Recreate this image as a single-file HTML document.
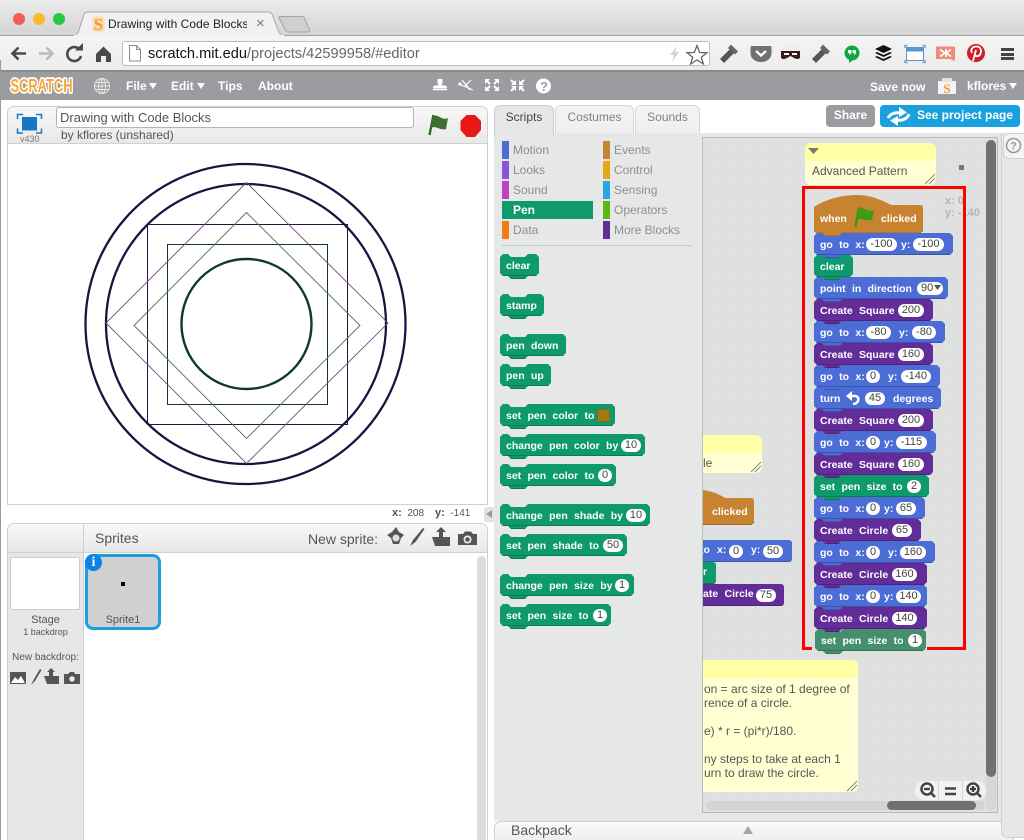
<!DOCTYPE html>
<html><head><meta charset="utf-8"><title>Drawing with Code Blocks</title>
<style>
html,body{margin:0;padding:0;background:#fff}
#r{position:relative;width:1024px;height:840px;overflow:hidden;background:#fff;font-family:"Liberation Sans",sans-serif}
#r div,#r span,#r svg{position:absolute}
.t{white-space:nowrap}
.b{height:25px;color:#fff;font:bold 10.5px/22px "Liberation Sans",sans-serif;white-space:nowrap;word-spacing:3.4px;
clip-path:polygon(0 3px,3px 0,8px 0,11px 3px,25px 3px,28px 0,calc(100% - 3px) 0,100% 3px,100% 19px,calc(100% - 3px) 22px,28px 22px,25px 25px,11px 25px,8px 22px,3px 22px,0 19px)}
.b b{position:absolute;top:1px;font-weight:bold}
.b i,.pi{position:absolute;top:5px;height:13px;border-radius:7px;background:#fff;color:#444;font:normal 11px/13px "Liberation Sans",sans-serif;text-align:center;word-spacing:0}
.m{background:linear-gradient(#4c6cd6 0 21px,#3a52a8 21px 22px,#4c6cd6 22px 24px,#3a52a8 24px)}
.p{background:linear-gradient(#0e9a6c 0 21px,#0a7a55 21px 22px,#0e9a6c 22px 24px,#0a7a55 24px)}
.v{background:linear-gradient(#632d99 0 21px,#4e2279 21px 22px,#632d99 22px 24px,#4e2279 24px)}
.g{background:linear-gradient(#458f70 0 21px,#367259 21px 22px,#458f70 22px 24px,#367259 24px)}
.c{font-size:12px;color:#8d8f92;line-height:18px;white-space:nowrap}
.s{width:7px;height:18px}
.nh{background:#ffffa5}
.nb{background:#ffffd2}
.nt{color:#555;font-size:12px;line-height:14px;white-space:nowrap}
.w{font:bold 12px/17px "Liberation Sans",sans-serif;color:#fff;white-space:nowrap}
</style></head><body><div id="r">

<!-- browser chrome -->
<div style="left:0;top:0;width:1024px;height:36px;background:linear-gradient(#ececec,#d4d4d4);border-bottom:1px solid #a3a3a3;box-sizing:border-box"></div>
<div style="left:0;top:36px;width:1024px;height:36px;background:linear-gradient(#f4f4f4,#ececec);border-bottom:2px solid #8b8b8b;box-sizing:border-box"></div>
<div style="left:13px;top:13px;width:12px;height:12px;border-radius:50%;background:#f45c57"></div>
<div style="left:33px;top:13px;width:12px;height:12px;border-radius:50%;background:#fcb82e"></div>
<div style="left:53px;top:13px;width:12px;height:12px;border-radius:50%;background:#27c93f"></div>
<svg style="left:0;top:0" width="330" height="37"><path d="M74 35.500C77 35.500 78 33 79 30L84 14C85 12.500 86 12 88 12H268C270 12 271 12.500 272 14L278 30C279 33 281 35.500 284 35.500Z" fill="#f1f1f1" stroke="#a8a8a8"/><path d="M74 35.500H284" stroke="#f1f1f1" stroke-width="1.500"/><path d="M280 16.500H302C303 16.500 304 17 304.500 18L309.500 29.500C310 31 309 32 307.500 32H288C286.500 32 285.500 31 285 29.500L279 18C278.500 17 279 16.500 280 16.500Z" fill="#cfcfcf" stroke="#a5a5a5"/></svg>
<svg style="left:92px;top:16px" width="13" height="17"><rect x=".5" y=".5" width="12" height="15.500" rx="3" fill="#fbdcb2"/><text x="6.500" y="14" text-anchor="middle" font-family="Liberation Serif" font-weight="bold" font-size="17" fill="#f39a2a">S</text></svg>
<div class="t" style="left:108px;top:16px;width:139px;overflow:hidden;font-size:12px;line-height:17px;color:#222;letter-spacing:.05px">Drawing with Code Blocks</div>
<div class="t" style="left:256px;top:15px;font-size:15px;line-height:18px;color:#777">×</div>
<!-- nav -->
<svg style="left:9px;top:42px" width="110" height="24" fill="none"><path d="M17 11.500H4M9.500 5.500L3.500 11.500L9.500 17.500" stroke="#4a4a4a" stroke-width="2.600"/><path d="M30 11.500H43M37.500 5.500L43.500 11.500L37.500 17.500" stroke="#b9b9b9" stroke-width="2.600"/><path d="M71 8A7 7 0 1 0 72 14" stroke="#4a4a4a" stroke-width="2.600"/><path d="M66 8.500H74V1Z" fill="#4a4a4a"/><path d="M87 12L94.500 4.500L102 12V20H97V14H92V20H87Z" fill="#4a4a4a"/></svg>
<div style="left:122px;top:41px;width:588px;height:25px;background:#fff;border:1px solid #bdbdbd;border-radius:3px;box-sizing:border-box"></div>
<svg style="left:128px;top:45px" width="14" height="17"><path d="M1.500 .500H8.500L12.500 4.500V16H1.500Z" fill="#fff" stroke="#8c8c8c"/><path d="M8.500 .500V4.500H12.500" fill="none" stroke="#8c8c8c"/></svg>
<div class="t" style="left:148px;top:45px;font-size:14.6px;line-height:19px;color:#111">scratch.mit.edu<span style="position:static;color:#666">/projects/42599958/#editor</span></div>
<svg style="left:666px;top:43px" width="44" height="22"><path d="M11 3L4 12H8L6 19L13 9H9Z" fill="#d2d2d2"/><path d="M31 2.500L33.700 9.500L41 9.700L35.300 14.200L37.400 21L31 17L24.600 21L26.700 14.200L21 9.700L28.300 9.500Z" fill="#fff" stroke="#666" stroke-width="1.300"/></svg>
<!-- extensions -->
<svg style="left:718px;top:42px" width="306" height="24">
<g id="w"><path d="M2 17L12 7L16 11L6 21Z" fill="#555"/><path d="M10 6L13 2.500L20 9.500L17 12.500Z" fill="#666"/></g>
<path d="M34 4H52C53 4 53.500 4.500 53.500 6V11C53.500 17 48 20 43 20C38 20 32.500 17 32.500 11V6C32.500 4.500 33 4 34 4Z" fill="#707070"/><path d="M38 9L43 13.500L48 9" fill="none" stroke="#fff" stroke-width="2.500"/>
<path d="M67 2H77L82 7V22H67Z" fill="#efefef"/><path d="M63 9H82V15C82 17 80 17.500 77 16.500L72.500 14L68 16.500C65 17.500 63 17 63 15Z" fill="#3d1a18"/><rect x="66" y="11" width="5" height="2" fill="#fff"/><rect x="74" y="11" width="5" height="2" fill="#fff"/>
<use href="#w" x="92"/>
<circle cx="134" cy="11" r="7.500" fill="#0fa83f"/><path d="M131 17V21L137 17Z" fill="#0fa83f"/><path d="M130 8H133.500V11L131.500 13.500V11H130ZM134.500 8H138V11L136 13.500V11H134.500Z" fill="#fff"/>
<path d="M157 7L165.500 3L174 7L165.500 11ZM157 11L159 10L165.500 13L172 10L174 11L165.500 15ZM157 15L159 14L165.500 17L172 14L174 15L165.500 19Z" fill="#111"/>
<rect x="188.500" y="5.500" width="17" height="13" fill="#fff" stroke="#5b97c9"/><rect x="188.500" y="5.500" width="17" height="4" fill="#5b97c9"/>
<path d="M187 6V3.500H189.500M204.500 3.500H207V6M187 18V20.500H189.500M204.500 20.500H207V18" fill="none" stroke="#5b97c9" stroke-width="1.300"/>
<path d="M218 4.500H237V19L232 17H218Z" fill="#ee8a78"/><path d="M222 7.500L227 11L222 14.500M233 7.500L228.500 11L233 14.500M228 7V15" fill="none" stroke="#fff" stroke-width="1.700"/>
<circle cx="258" cy="11" r="9" fill="#cb2128"/>
<path d="M255 19L258 8M254 11C252 7 255 4.500 258.500 4.500C263 4.500 264 9 262 12.500C260.500 15 257 14.500 257 12.500" fill="none" stroke="#fff" stroke-width="1.800"/>
</svg>
<div style="left:1001px;top:48px;width:13px;height:3px;background:#444"></div>
<div style="left:1001px;top:52.500px;width:13px;height:3px;background:#444"></div>
<div style="left:1001px;top:57px;width:13px;height:3px;background:#444"></div>

<!-- scratch bar -->
<div style="left:0;top:72px;width:1024px;height:28px;background:#9b9c9f"></div>
<svg style="left:8px;top:74px" width="70" height="24"><text x="2.500" y="18" font-family="Liberation Sans" font-weight="bold" font-size="18" textLength="62" lengthAdjust="spacingAndGlyphs" fill="#f8a638" stroke="#fff" stroke-width="3.500" stroke-linejoin="round" style="paint-order:stroke fill">SCRATCH</text></svg>
<svg style="left:93px;top:77px" width="18" height="18" fill="none" stroke="#e7e7e7"><circle cx="9" cy="9" r="7.500"/><ellipse cx="9" cy="9" rx="3.500" ry="7.500"/><path d="M1.500 9H16.500M2.500 5.500H15.500M2.500 12.500H15.500M9 1.500V16.500"/></svg>
<div class="w" style="left:126px;top:78px">File</div>
<svg style="left:149px;top:83px" width="9" height="7"><path d="M0 0H8L4 6Z" fill="#fff"/></svg>
<div class="w" style="left:171px;top:78px">Edit</div>
<svg style="left:197px;top:83px" width="9" height="7"><path d="M0 0H8L4 6Z" fill="#fff"/></svg>
<div class="w" style="left:218px;top:78px">Tips</div>
<div class="w" style="left:258px;top:78px">About</div>
<svg style="left:430px;top:76px" width="125" height="20" fill="#fff">
<path d="M7.500 3H12.500V6.500C12.500 8 11.500 8.500 11.500 9.500H14.500C16 9.500 17 10.500 17 12H3C3 10.500 4 9.500 5.500 9.500H8.500C8.500 8.500 7.500 8 7.500 6.500Z"/><rect x="3" y="12.500" width="14" height="1.800"/>
<path d="M29 8L43 14M32 4L37 10L40 14M41 4L35 10" fill="none" stroke="#fff" stroke-width="1.200"/><circle cx="30" cy="8" r="1.600"/>
<path d="M55 3H60L55 8ZM69 3H64L69 8ZM55 15H60L55 10ZM69 15H64L69 10Z"/><path d="M57 5L60 8M67 5L64 8M57 13L60 10M67 13L64 10" stroke="#fff" stroke-width="2"/>
<path d="M86 9V4L81 9ZM89 9V4L94 9ZM86 10V15L81 10ZM89 10V15L94 10Z"/><path d="M85 8L81 4M90 8L94 4M85 11L81 15M90 11L94 15" stroke="#fff" stroke-width="2"/>
<circle cx="113.500" cy="10" r="7.500"/></svg>
<div class="t" style="left:540px;top:78px;font:bold 13px/17px 'Liberation Sans',sans-serif;color:#9b9c9f">?</div>
<div class="w" style="left:870px;top:79px">Save now</div>
<svg style="left:937px;top:77px" width="20" height="18"><rect x="1" y="4" width="18" height="13" rx="1" fill="#f4f4f4"/><rect x="5" y="1" width="10" height="4" rx="1" fill="#e3e3e3"/><text x="10" y="16" text-anchor="middle" font-family="Liberation Serif" font-size="13" font-weight="bold" fill="#f39c28">S</text></svg>
<div class="w" style="left:967px;top:78px">kflores</div>
<svg style="left:1009px;top:83px" width="9" height="7"><path d="M0 0H8L4 6Z" fill="#fff"/></svg>

<!-- stage header -->
<div style="left:7px;top:106px;width:481px;height:38px;background:linear-gradient(#f8f8f8,#e8e8e8);border:1px solid #d0d0d0;border-bottom:0;border-radius:7px 7px 0 0;box-sizing:border-box"></div>
<svg style="left:16px;top:113px" width="28" height="22"><path d="M1.500 6V1.500H7M20 1.500H25.500V6M1.500 15.500V20H7M20 20H25.500V15.500" fill="none" stroke="#1678c2" stroke-width="1.500"/><rect x="6" y="4" width="15" height="13.500" fill="#1678c2"/></svg>
<div class="t" style="left:20px;top:134px;font-size:9px;line-height:11px;color:#777">v430</div>
<div class="t" style="left:56px;top:107px;width:358px;height:21px;background:#fff;border:1px solid #b5b5b5;border-radius:3px;box-sizing:border-box;font-size:13px;line-height:19px;color:#555;padding-left:3px">Drawing with Code Blocks</div>
<div class="t" style="left:61px;top:128px;font-size:12px;line-height:15px;color:#555">by kflores (unshared)</div>
<svg style="left:427px;top:113px" width="24" height="24"><path d="M2.500 22L6.500 2" stroke="#2f6a2a" stroke-width="2.400"/><path d="M6 3C11 0.500 15 8 21 5L19 16C13 18 9 12 4 15Z" fill="#3d6f30"/></svg>
<svg style="left:460px;top:115px" width="22" height="22"><path d="M6.500 0H15L21 6V15L15 22H6.500L0.500 15V6Z" fill="#e81818"/></svg>

<!-- stage -->
<div style="left:7px;top:143px;width:481px;height:362px;background:#fff;border:1px solid #d0d0d0;box-sizing:border-box"></div>
<svg style="left:0;top:143px" width="490" height="362" viewBox="0 143 490 362" fill="none">
<circle cx="245.500" cy="324" r="160" stroke="#1b1440" stroke-width="2.300"/>
<circle cx="246" cy="324" r="140" stroke="#1b1440" stroke-width="2.300"/>
<circle cx="246.500" cy="324" r="65" stroke="#0e3a2d" stroke-width="2.400"/>
<rect x="147.500" y="224.500" width="200" height="200" stroke="#2d0f40"/>
<rect x="167.500" y="244.500" width="160" height="160" stroke="#0f3a20"/>
<path d="M246.500 182.500L388 323L246.500 463.500L106 323Z" stroke="#6c4f78" stroke-width=".9"/>
<path d="M246.500 212.500L360 325.500L246.500 438.500L134 325.500Z" stroke="#4f7050" stroke-width=".9"/>
</svg>
<div class="t" style="left:392px;top:507px;font-size:10px;line-height:12px;color:#555"><b style="font-size:11px">x:</b>&nbsp; 208</div>
<div class="t" style="left:435px;top:507px;font-size:10px;line-height:12px;color:#555"><b style="font-size:11px">y:</b>&nbsp; -141</div>
<div style="left:484px;top:507px;width:10px;height:15px;background:#e3e3e3;border-radius:3px 0 0 3px"></div>
<svg style="left:486px;top:510px" width="7" height="9"><path d="M6 0V8L0 4Z" fill="#999"/></svg>

<!-- sprites panel -->
<div style="left:7px;top:523px;width:481px;height:330px;background:#fff;border:1px solid #d0d0d0;border-radius:7px 7px 0 0;box-sizing:border-box"></div>
<div style="left:8px;top:524px;width:479px;height:29px;background:linear-gradient(#f8f8f8,#e8e8e8);border-bottom:1px solid #d0d0d0;border-radius:7px 7px 0 0;box-sizing:border-box"></div>
<div style="left:8px;top:553px;width:75px;height:287px;background:#e6e8e8"></div>
<div style="left:83px;top:524px;width:1px;height:316px;background:#d0d0d0"></div>
<div class="t" style="left:95px;top:529px;font-size:14px;line-height:18px;color:#555">Sprites</div>
<div class="t" style="left:308px;top:530px;font-size:14px;line-height:18px;color:#555">New sprite:</div>
<svg style="left:386px;top:526px" width="92" height="22" fill="#555">
<path d="M10 1L13 6L18 9L15 12L13 18H7L5 12L1 9L6 6Z"/><circle cx="10" cy="12" r="3.500" fill="#ddd"/>
<path d="M24 20L27 14L37 2L38.500 3L29.500 16Z"/>
<path d="M46 11H53V6H50L55 1L60 6H57V11H64V20H49Z"/>
<path d="M72 8H77L79 5.500H85L87 8H91V19H72Z"/><circle cx="81.500" cy="13.500" r="4" fill="#eee"/><circle cx="81.500" cy="13.500" r="2.300"/>
</svg>
<div style="left:10px;top:557px;width:70px;height:53px;background:#fff;border:1px solid #ccc;border-radius:2px;box-sizing:border-box"></div>
<div class="t" style="left:8px;top:613px;width:75px;text-align:center;font-size:11px;line-height:14px;color:#555">Stage</div>
<div class="t" style="left:8px;top:626px;width:75px;text-align:center;font-size:9px;line-height:13px;color:#555">1 backdrop</div>
<div class="t" style="left:8px;top:651px;width:75px;text-align:center;font-size:10px;line-height:13px;color:#555">New backdrop:</div>
<svg style="left:10px;top:668px" width="72" height="18" fill="#555">
<rect x="0" y="4" width="16" height="12"/><path d="M1 15L5 9L8 12L11 8L15 15Z" fill="#fff"/>
<path d="M21 17L24 11L30 1L31.500 2L25 13Z"/>
<path d="M34 8H39V4H37L41 0L45 4H43V8H49V16H37Z"/>
<path d="M54 6H58L60 4H64L65 6H70V16H54Z"/><circle cx="62" cy="11" r="2.700" fill="#eee"/>
</svg>
<div style="left:85px;top:554px;width:76px;height:76px;background:#d0d0d0;border:3px solid #1aa0dc;border-radius:8px;box-sizing:border-box"></div>
<div style="left:85px;top:554px;width:17px;height:17px;border-radius:50%;background:#0a82e6"></div>
<div class="t" style="left:85px;top:554px;width:17px;text-align:center;font:bold 14px/17px 'Liberation Serif',serif;color:#fff">i</div>
<div style="left:121px;top:582px;width:4px;height:4px;background:#000"></div>
<div class="t" style="left:88px;top:613px;width:70px;text-align:center;font-size:11px;line-height:14px;color:#555">Sprite1</div>
<div style="left:477px;top:556px;width:9px;height:290px;background:#dcdcdc;border-radius:5px"></div>

<!-- right column background -->
<div style="left:494px;top:133px;width:530px;height:688px;background:#e6e8e8"></div>

<!-- tabs -->
<div style="left:494px;top:105px;width:60px;height:32px;background:#e6e8e8;border:1px solid #ccc;border-bottom:0;border-radius:6px 6px 0 0;box-sizing:border-box"></div>
<div class="t" style="left:494px;top:110px;width:60px;text-align:center;font-size:12px;line-height:15px;color:#444">Scripts</div>
<div style="left:555px;top:105px;width:79px;height:28px;background:linear-gradient(#f4f4f4,#efefef);border:1px solid #d6d6d6;border-bottom:0;border-radius:6px 6px 0 0;box-sizing:border-box"></div>
<div class="t" style="left:555px;top:110px;width:79px;text-align:center;font-size:12px;line-height:15px;color:#808080">Costumes</div>
<div style="left:635px;top:105px;width:65px;height:28px;background:linear-gradient(#f4f4f4,#efefef);border:1px solid #d6d6d6;border-bottom:0;border-radius:6px 6px 0 0;box-sizing:border-box"></div>
<div class="t" style="left:635px;top:110px;width:65px;text-align:center;font-size:12px;line-height:15px;color:#808080">Sounds</div>
<div style="left:826px;top:105px;width:49px;height:22px;background:#9b9c9f;border-radius:4px"></div>
<div class="w" style="left:826px;top:107px;width:49px;text-align:center">Share</div>
<div style="left:880px;top:105px;width:140px;height:22px;background:#1aa0dc;border-radius:4px"></div>
<svg style="left:885px;top:106px" width="28" height="20" fill="none" stroke="#fff" stroke-width="3"><path d="M3 12C5 8 10 6 15 7"/><path d="M24 8C23 12 18 15 12 14"/><path d="M14 1L22 6.500L14 11Z M13 20L5 14.500L13 10Z" fill="#fff" stroke="none"/></svg>
<div class="w" style="left:917px;top:107px">See project page</div>

<!-- palette -->
<div style="left:702px;top:137px;width:1px;height:676px;background:#b9bbbb"></div>
<div class="s" style="left:502px;top:141px;background:#4a6cd4"></div><div class="c" style="left:513px;top:141px">Motion</div>
<div class="s" style="left:502px;top:161px;background:#8a55d7"></div><div class="c" style="left:513px;top:161px">Looks</div>
<div class="s" style="left:502px;top:181px;background:#bb42c3"></div><div class="c" style="left:513px;top:181px">Sound</div>
<div style="left:502px;top:201px;width:91px;height:18px;background:#0e9a6c"></div><div class="c" style="left:513px;top:201px;color:#fff;font-weight:bold">Pen</div>
<div class="s" style="left:502px;top:221px;background:#ee7d16"></div><div class="c" style="left:513px;top:221px">Data</div>
<div class="s" style="left:603px;top:141px;background:#c88330"></div><div class="c" style="left:614px;top:141px">Events</div>
<div class="s" style="left:603px;top:161px;background:#e6a81a"></div><div class="c" style="left:614px;top:161px">Control</div>
<div class="s" style="left:603px;top:181px;background:#2ca5e2"></div><div class="c" style="left:614px;top:181px">Sensing</div>
<div class="s" style="left:603px;top:201px;background:#5cb712"></div><div class="c" style="left:614px;top:201px">Operators</div>
<div class="s" style="left:603px;top:221px;background:#632d99"></div><div class="c" style="left:614px;top:221px">More Blocks</div>
<div style="left:502px;top:245px;width:190px;height:1px;background:#c8c8c8"></div>

<div class="b p" style="left:500px;top:254px;width:39px"><b style="left:6px">clear</b></div>
<div class="b p" style="left:500px;top:294px;width:44px"><b style="left:6px">stamp</b></div>
<div class="b p" style="left:500px;top:334px;width:66px"><b style="left:6px">pen down</b></div>
<div class="b p" style="left:500px;top:364px;width:51px"><b style="left:6px">pen up</b></div>
<div class="b p" style="left:500px;top:404px;width:115px"><b style="left:6px">set pen color to</b></div>
<div style="left:597px;top:409px;width:13px;height:13px;background:#a07a10;border:1px solid #8a6a10;box-sizing:border-box"></div>
<div class="b p" style="left:500px;top:434px;width:145px"><b style="left:6px">change pen color by</b><i style="left:121px;width:20px">10</i></div>
<div class="b p" style="left:500px;top:464px;width:116px"><b style="left:6px">set pen color to</b><i style="left:98px;width:14px">0</i></div>
<div class="b p" style="left:500px;top:504px;width:150px"><b style="left:6px">change pen shade by</b><i style="left:126px;width:20px">10</i></div>
<div class="b p" style="left:500px;top:534px;width:127px"><b style="left:6px">set pen shade to</b><i style="left:103px;width:20px">50</i></div>
<div class="b p" style="left:500px;top:574px;width:134px"><b style="left:6px">change pen size by</b><i style="left:115px;width:14px">1</i></div>
<div class="b p" style="left:500px;top:604px;width:111px"><b style="left:6px">set pen size to</b><i style="left:93px;width:14px">1</i></div>

<!-- script area -->
<div style="left:703px;top:137px;width:295px;height:676px;background:#dfe1e1;border:1px solid #b9bbbb;border-left:0;box-sizing:border-box"></div>
<svg style="left:703px;top:138px" width="294" height="674"><defs><pattern id="d" width="18" height="18" patternUnits="userSpaceOnUse"><path d="M8.500 9.500H10.500M9.500 8.500V10.500" stroke="#e6e8e8"/></pattern></defs><rect width="294" height="674" fill="url(#d)"/></svg>
<div style="left:959px;top:165px;width:5px;height:5px;background:#777"></div>
<div class="t" style="left:945px;top:194px;font:bold 11px/14px 'Liberation Sans',sans-serif;color:#b4b6b6">x: 0</div>
<div class="t" style="left:945px;top:206px;font:bold 11px/14px 'Liberation Sans',sans-serif;color:#b4b6b6">y: -140</div>

<!-- notes -->
<div style="left:805px;top:143px;width:131px;height:18px;border-radius:6px 6px 0 0" class="nh"></div>
<div style="left:805px;top:161px;width:131px;height:24px;border-radius:0 0 6px 6px" class="nb"></div>
<svg style="left:808px;top:148px" width="12" height="7"><path d="M0 0H11L5.500 6Z" fill="#777"/></svg>
<div class="nt" style="left:812px;top:164px">Advanced Pattern</div>
<svg style="left:924px;top:173px" width="12" height="12" stroke="#888" fill="none"><path d="M1 11L11 1M5 11L11 5"/></svg>

<div style="left:703px;top:435px;width:59px;height:18px;border-radius:0 6px 0 0" class="nh"></div>
<div style="left:703px;top:453px;width:59px;height:20px;border-radius:0 0 6px 0" class="nb"></div>
<div class="nt" style="left:703px;top:456px">le</div>
<svg style="left:750px;top:461px" width="12" height="12" stroke="#888" fill="none"><path d="M1 11L11 1M5 11L11 5"/></svg>

<div style="left:703px;top:660px;width:155px;height:18px;border-radius:0 6px 0 0" class="nh"></div>
<div style="left:703px;top:678px;width:155px;height:114px;border-radius:0 0 6px 0" class="nb"></div>
<div style="left:704px;top:660px;width:155px;height:134px;overflow:hidden">
<div class="nt" style="left:0;top:22px">on = arc size of 1 degree of</div>
<div class="nt" style="left:0;top:36px">rence of a circle.</div>
<div class="nt" style="left:0;top:64px">e) * r = (pi*r)/180.</div>
<div class="nt" style="left:0;top:92px">ny steps to take at each 1</div>
<div class="nt" style="left:0;top:106px">urn to draw the circle.</div>
</div>
<svg style="left:846px;top:780px" width="12" height="12" stroke="#888" fill="none"><path d="M1 11L11 1M5 11L11 5"/></svg>

<!-- partial blocks left -->
<svg style="left:703px;top:488px" width="54" height="42"><path d="M0 2C8 3 16 6 22 10H48C50 10 51 11 51 13V34L48 37H0Z" fill="#c88330"/><path d="M0 36.500H48L51 34" stroke="#a06a25" fill="none"/></svg>
<div class="t" style="left:712px;top:505px;font:bold 10.500px/14px 'Liberation Sans',sans-serif;color:#fff">clicked</div>
<div style="left:703px;top:540px;width:89px;height:22px;background:#4c6cd6;border-bottom:1px solid #3a52a8;border-radius:0 3px 3px 0;box-sizing:border-box;color:#fff;font:bold 10.500px/21px 'Liberation Sans',sans-serif;overflow:hidden"><b style="position:absolute;left:-3px">to</b><b style="position:absolute;left:14px">x:</b><i class="pi" style="left:26px;width:14px">0</i><b style="position:absolute;left:48px">y:</b><i class="pi" style="left:60px;width:20px">50</i></div>
<div style="left:703px;top:562px;width:13px;height:22px;background:#0e9a6c;border-bottom:1px solid #0a7a55;border-radius:0 3px 3px 0;box-sizing:border-box;color:#fff;font:bold 10.500px/21px 'Liberation Sans',sans-serif">r</div>
<div style="left:703px;top:584px;width:81px;height:22px;background:#632d99;border-bottom:1px solid #4e2279;border-radius:0 3px 3px 0;box-sizing:border-box;color:#fff;font:bold 10.500px/21px 'Liberation Sans',sans-serif;white-space:nowrap;word-spacing:3.400px">ate Circle<i class="pi" style="left:53px;width:20px">75</i></div>

<!-- red highlight -->
<div style="left:802px;top:186px;width:164px;height:464px;border:3px solid #f00;box-sizing:border-box"></div>
<div style="left:812px;top:645px;width:115px;height:6px;background:#dfe1e1"></div>

<!-- main stack -->
<svg style="left:814px;top:194px" width="110" height="44"><path d="M0 13C14 4 30 1 44 1C56 1 68 6 77 11H106C108 11 109 12 109 14V36L106 39H28L25 42H11L8 39H3L0 36Z" fill="#c88330"/><path d="M0 36L3 39H8L11 42H25L28 39H106L109 36" fill="none" stroke="#a06a25"/></svg>
<div class="t" style="left:820px;top:212px;font:bold 10.500px/14px 'Liberation Sans',sans-serif;color:#fff">when</div>
<svg style="left:853px;top:206px" width="23" height="22"><path d="M2.500 21L5.500 3" stroke="#3f9a18" stroke-width="2.400"/><path d="M5 2C10 -1 14 7 21 4L19 14C13 16 9 11 3.500 14Z" fill="#3f9a18"/></svg>
<div class="t" style="left:881px;top:212px;font:bold 10.500px/14px 'Liberation Sans',sans-serif;color:#fff">clicked</div>

<div class="b m" style="left:814px;top:233px;width:139px"><b style="left:6px">go to x:</b><i style="left:52px;width:31px">-100</i><b style="left:87px">y:</b><i style="left:99px;width:31px">-100</i></div>
<div class="b p" style="left:814px;top:255px;width:39px"><b style="left:6px">clear</b></div>
<div class="b m" style="left:814px;top:277px;width:134px"><b style="left:6px">point in direction</b><i style="left:103px;width:26px;text-align:left;padding-left:4px;box-sizing:border-box">90</i></div>
<svg style="left:934px;top:285px" width="8" height="6"><path d="M0 0H7L3.500 5Z" fill="#555"/></svg>
<div class="b v" style="left:814px;top:299px;width:119px"><b style="left:6px">Create Square</b><i style="left:84px;width:26px">200</i></div>
<div class="b m" style="left:814px;top:321px;width:131px"><b style="left:6px">go to x:</b><i style="left:52px;width:25px">-80</i><b style="left:85px">y:</b><i style="left:98px;width:24px">-80</i></div>
<div class="b v" style="left:814px;top:343px;width:119px"><b style="left:6px">Create Square</b><i style="left:84px;width:26px">160</i></div>
<div class="b m" style="left:814px;top:365px;width:126px"><b style="left:6px">go to x:</b><i style="left:52px;width:14px">0</i><b style="left:74px">y:</b><i style="left:87px;width:30px">-140</i></div>
<div class="b m" style="left:814px;top:387px;width:127px"><b style="left:6px">turn</b><i style="left:51px;width:20px">45</i><b style="left:79px">degrees</b></div>
<svg style="left:845px;top:391px" width="17" height="14"><path d="M3 5H10C13 5 14 8 13 10C12 12 10 13 8 13" fill="none" stroke="#fff" stroke-width="2.500"/><path d="M7 0V10L1 5Z" fill="#fff"/></svg>
<div class="b v" style="left:814px;top:409px;width:119px"><b style="left:6px">Create Square</b><i style="left:84px;width:26px">200</i></div>
<div class="b m" style="left:814px;top:431px;width:122px"><b style="left:6px">go to x:</b><i style="left:52px;width:14px">0</i><b style="left:70px">y:</b><i style="left:82px;width:31px">-115</i></div>
<div class="b v" style="left:814px;top:453px;width:119px"><b style="left:6px">Create Square</b><i style="left:84px;width:26px">160</i></div>
<div class="b p" style="left:814px;top:475px;width:115px"><b style="left:6px">set pen size to</b><i style="left:93px;width:14px">2</i></div>
<div class="b m" style="left:814px;top:497px;width:111px"><b style="left:6px">go to x:</b><i style="left:52px;width:14px">0</i><b style="left:70px">y:</b><i style="left:82px;width:20px">65</i></div>
<div class="b v" style="left:814px;top:519px;width:107px"><b style="left:6px">Create Circle</b><i style="left:78px;width:20px">65</i></div>
<div class="b m" style="left:814px;top:541px;width:121px"><b style="left:6px">go to x:</b><i style="left:52px;width:14px">0</i><b style="left:74px">y:</b><i style="left:86px;width:26px">160</i></div>
<div class="b v" style="left:814px;top:563px;width:113px"><b style="left:6px">Create Circle</b><i style="left:78px;width:25px">160</i></div>
<div class="b m" style="left:814px;top:585px;width:113px"><b style="left:6px">go to x:</b><i style="left:52px;width:14px">0</i><b style="left:70px">y:</b><i style="left:82px;width:25px">140</i></div>
<div class="b v" style="left:814px;top:607px;width:113px"><b style="left:6px">Create Circle</b><i style="left:78px;width:25px">140</i></div>
<div class="b g" style="left:815px;top:629px;width:111px"><b style="left:6px">set pen size to</b><i style="left:93px;width:14px">1</i></div>

<!-- scrollbars -->
<div style="left:986px;top:140px;width:10px;height:670px;background:#d6d8d8;border-radius:5px"></div>
<div style="left:986px;top:140px;width:10px;height:637px;background:#6f7074;border-radius:5px"></div>
<div style="left:706px;top:801px;width:279px;height:9px;background:#d3d5d5;border-radius:5px"></div>
<div style="left:887px;top:801px;width:89px;height:9px;background:#6f7074;border-radius:5px"></div>
<div style="left:915px;top:781px;width:71px;height:19px;background:#f2f2f2;border-radius:9px"></div>
<div style="left:938px;top:781px;width:1px;height:19px;background:#d5d5d5"></div>
<div style="left:962px;top:781px;width:1px;height:19px;background:#d5d5d5"></div>
<svg style="left:918px;top:782px" width="66" height="18"><circle cx="9" cy="7" r="5.500" fill="#fff" stroke="#444" stroke-width="2.500"/><path d="M13 11L17 15M6 7H12" stroke="#444" stroke-width="2.500"/><path d="M27 6.500H38M27 12H38" stroke="#444" stroke-width="2.500"/><circle cx="55" cy="7" r="5.500" fill="#fff" stroke="#444" stroke-width="2.500"/><path d="M59 11L63 15M52 7H58M55 4V10" stroke="#444" stroke-width="2.500"/></svg>

<!-- backpack + help -->
<div style="left:494px;top:821px;width:520px;height:25px;background:linear-gradient(#fafafa,#ececec);border:1px solid #d0d0d0;border-radius:7px 7px 0 0;box-sizing:border-box"></div>
<div class="t" style="left:511px;top:822px;font-size:14px;line-height:17px;color:#555">Backpack</div>
<svg style="left:743px;top:826px" width="10" height="9"><path d="M0 8L5 0L10 8Z" fill="#a5a5a5"/></svg>
<div style="left:1001px;top:133px;width:23px;height:705px;background:#e6e8e8;border-left:1px solid #d0d0d0;border-bottom:1px solid #d0d0d0;border-radius:0 0 0 7px;box-sizing:border-box"></div>
<div style="left:1003px;top:133px;width:21px;height:26px;background:#f4f4f4;border:1px solid #d0d0d0;border-right:0;border-radius:6px 0 0 6px;box-sizing:border-box"></div>
<svg style="left:1005px;top:137px" width="17" height="17"><circle cx="8.500" cy="8.500" r="7" fill="none" stroke="#999" stroke-width="1.500"/><text x="8.500" y="12.500" text-anchor="middle" font-family="Liberation Sans" font-weight="bold" font-size="11" fill="#999">?</text></svg>
<div style="left:0;top:60px;width:1px;height:780px;background:#9a9a9a"></div>
</div></body></html>
